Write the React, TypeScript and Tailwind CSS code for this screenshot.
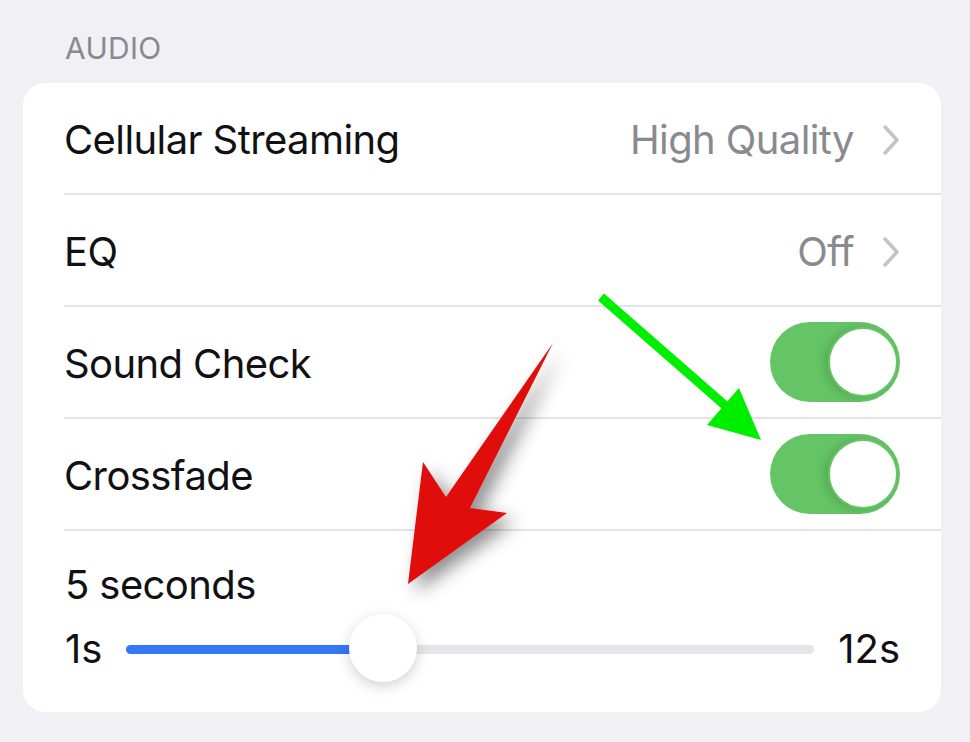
import React from "react";

const font = { fontFamily: "Inter, 'Noto Sans', sans-serif" };

function Chevron() {
  return (
    <svg width="18" height="32" viewBox="0 0 18 32" className="shrink-0">
      <path d="M3 3 L15 16 L3 29" fill="none" stroke="#c4c4c7" strokeWidth="3.5" strokeLinecap="round" strokeLinejoin="round" />
    </svg>
  );
}

function Toggle() {
  return (
    <div className="relative w-[130px] h-[80px] rounded-full bg-[#65c466]">
      <div className="absolute right-[2px] top-[5px] w-[70px] h-[70px] rounded-full bg-white border-[2px] border-[#65c466] shadow-[-4px_1px_8px_rgba(0,60,0,0.18)]" />
    </div>
  );
}

function Row({ label, children }: { label: string; children?: React.ReactNode }) {
  return (
    <div className="pl-[41px]">
      <div className="h-[112px] flex items-center justify-between pr-[41px] border-b-2 border-[#e4e4e7]">
        <span className="text-[40px] text-[#111113] tracking-[-0.6px] pt-[4px]">{label}</span>
        {children}
      </div>
    </div>
  );
}

function Detail({ value }: { value: string }) {
  return (
    <div className="flex items-center gap-[28px] pt-[4px]">
      <span className="text-[40px] text-[#8a8a8e] tracking-[-0.6px]">{value}</span>
      <Chevron />
    </div>
  );
}

function Arrows() {
  return (
    <svg className="absolute inset-0 pointer-events-none" width="970" height="742" viewBox="0 0 970 742">
      <defs>
        <filter id="sh" x="-30%" y="-30%" width="160%" height="160%">
          <feDropShadow dx="8" dy="8" stdDeviation="9" floodColor="#000" floodOpacity="0.45" />
        </filter>
      </defs>
      <line x1="601" y1="297" x2="728" y2="408" stroke="#00ee00" strokeWidth="9" />
      <polygon points="707,425 739,388 761,440" fill="#00ee00" />
      <polygon
        points="553,343 470,508 507,513 408,584 423,462 446,497"
        fill="#e00a0a"
        filter="url(#sh)"
      />
    </svg>
  );
}

export default function App() {
  return (
    <div className="relative w-[970px] h-[742px] bg-[#f0f0f5] overflow-hidden" style={font}>
      <div className="pl-[65px] pt-[33px] h-[83px] text-[30px] text-[#8a8a8e] tracking-[0.3px] leading-[30px]">AUDIO</div>
      <div className="ml-[23px] w-[918px] h-[629px] bg-white rounded-[22px]">
        <Row label="Cellular Streaming">
          <Detail value="High Quality" />
        </Row>
        <Row label="EQ">
          <Detail value="Off" />
        </Row>
        <Row label="Sound Check">
          <Toggle />
        </Row>
        <Row label="Crossfade">
          <Toggle />
        </Row>
        <div className="pl-[42px] pr-[41px] pt-[26px]">
          <div className="text-[40px] text-[#111113] tracking-[-0.6px] leading-[56px]">5 seconds</div>
          <div className="flex items-center mt-[1px] h-[70px]">
            <span className="text-[40px] text-[#111113] w-[61px]">1s</span>
            <div className="relative flex-1 h-[9px] rounded-full bg-[#e5e5ea] mr-[24px]">
              <div className="absolute left-0 top-0 h-[9px] w-[240px] rounded-full bg-[#3478f6]" />
              <div className="absolute left-[223px] top-[-31px] w-[68px] h-[68px] rounded-full bg-white shadow-[0_4px_14px_rgba(0,0,0,0.18)]" />
            </div>
            <span className="text-[40px] text-[#111113]">12s</span>
          </div>
        </div>
      </div>
      <Arrows />
    </div>
  );
}
